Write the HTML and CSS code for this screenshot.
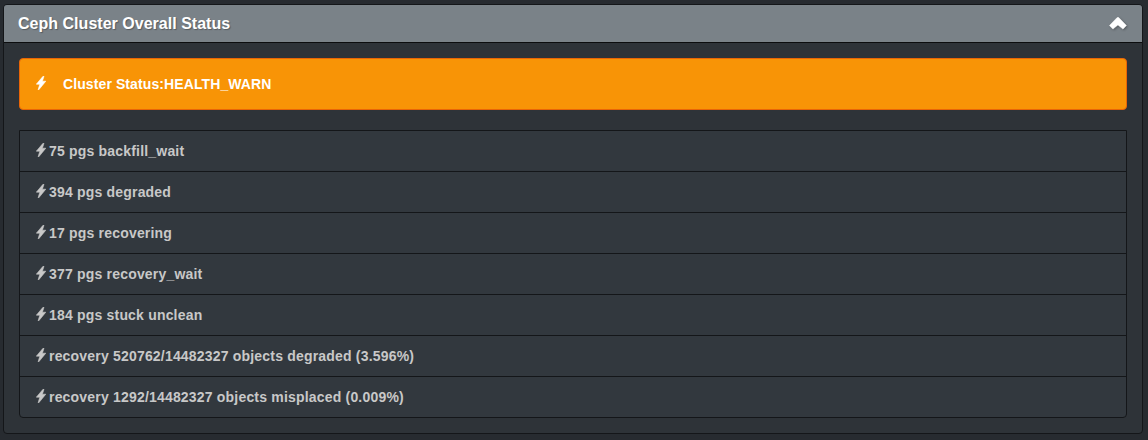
FILE: index.html
```html
<!DOCTYPE html>
<html lang="en">

<head>
    <meta charset="UTF-8">
    <meta name="viewport" content="width=device-width, initial-scale=1.0">
    <title>Ceph Cluster Overall Status</title>
    <link rel="stylesheet" href="styles.css">
</head>

<body>
    <svg class="icon-defs">
        <symbol id="flash" viewBox="0 0 10 14">
            <path d="M7 0.3 0.3 8.2h3.5L2.1 13.8h0.7L9.8 5.2H6.4L8 0.3z" />
        </symbol>
    </svg>

    <div class="panel">
        <div class="panel-heading">
            <h3 class="panel-title">Ceph Cluster Overall Status</h3>
            <svg class="chevron" viewBox="0 0 18 13">
                <path d="M8.2 0.5h1.5L17.4 8.5 14 12.1 8.95 7.9 3.9 12.1 0.5 8.5z" />
            </svg>
        </div>
        <div class="panel-body">
            <div class="alert">
                <svg class="flash"><use href="#flash" /></svg>
                <span class="alert-text">Cluster Status:HEALTH_WARN</span>
            </div>
            <ul class="list-group">
                <li class="list-item"><svg class="flash"><use href="#flash" /></svg><span>75 pgs backfill_wait</span></li>
                <li class="list-item"><svg class="flash"><use href="#flash" /></svg><span>394 pgs degraded</span></li>
                <li class="list-item"><svg class="flash"><use href="#flash" /></svg><span>17 pgs recovering</span></li>
                <li class="list-item"><svg class="flash"><use href="#flash" /></svg><span>377 pgs recovery_wait</span></li>
                <li class="list-item"><svg class="flash"><use href="#flash" /></svg><span>184 pgs stuck unclean</span></li>
                <li class="list-item"><svg class="flash"><use href="#flash" /></svg><span>recovery 520762/14482327 objects degraded (3.596%)</span></li>
                <li class="list-item"><svg class="flash"><use href="#flash" /></svg><span>recovery 1292/14482327 objects misplaced (0.009%)</span></li>
            </ul>
        </div>
    </div>
</body>

</html>
```

FILE: styles.css
```css
* {
    box-sizing: border-box;
}

body {
    margin: 0;
    padding: 4px 5px 6px 3px;
    height: 440px;
    overflow: hidden;
    background-color: #272b30;
    font-family: "Liberation Sans", Arial, sans-serif;
    font-size: 14px;
    font-weight: bold;
    color: #c8c8c8;
}

.icon-defs {
    display: none;
}

.panel {
    height: 430px;
    border: 1px solid #141619;
    border-radius: 4px;
    background-color: #2e3338;
    overflow: hidden;
}

.panel-heading {
    display: flex;
    align-items: center;
    justify-content: space-between;
    height: 38px;
    padding: 0 15px 0 14px;
    border-bottom: 1px solid #0c0d0e;
    background-color: #7a8288;
}

.panel-title {
    margin: 0;
    font-size: 16px;
    line-height: 18px;
    letter-spacing: 0.02px;
    color: #fff;
    text-shadow: 1px 1px 1px rgba(0, 0, 0, 0.3);
}

.chevron {
    width: 18px;
    height: 13px;
    fill: #fff;
    stroke: #fff;
    stroke-width: 0.5;
    filter: drop-shadow(1px 1px 1px rgba(0, 0, 0, 0.3));
}

.panel-body {
    padding: 15px;
}

.alert {
    display: flex;
    align-items: center;
    height: 52px;
    padding: 0 16px;
    margin-bottom: 20px;
    border: 1px solid #e96506;
    border-radius: 4px;
    background-color: #f89406;
    color: #fff;
}

.alert-text {
    margin-left: 17px;
    letter-spacing: 0.1px;
}

.flash {
    width: 10px;
    height: 14px;
    margin-bottom: 2px;
    fill: currentColor;
    stroke: currentColor;
    stroke-width: 0.6;
}

.list-group {
    margin: 0;
    padding: 0;
    list-style: none;
    border: 1px solid #141619;
    border-radius: 0 0 4px 4px;
    background-color: #32383e;
    overflow: hidden;
}

.list-item {
    display: flex;
    align-items: center;
    height: 41px;
    padding-left: 16px;
    border-bottom: 1px solid #141619;
}

.list-item:last-child {
    height: 40px;
    border-bottom: none;
}

.list-item span {
    margin-left: 3px;
    letter-spacing: 0.19px;
}
```
